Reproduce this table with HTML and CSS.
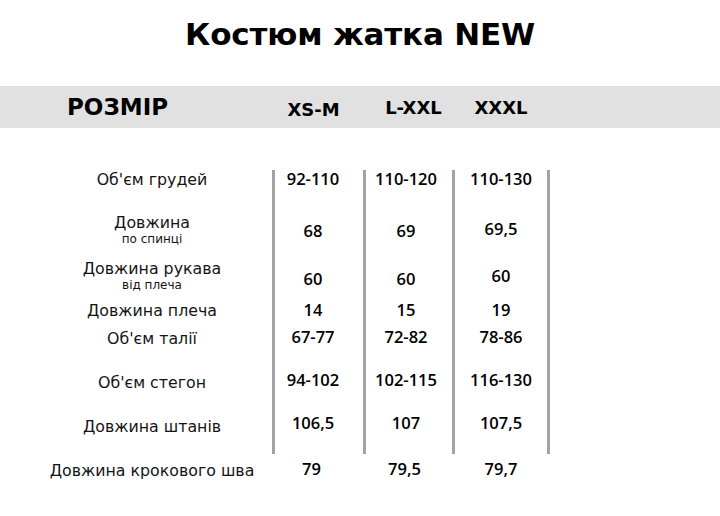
FILE: index.html
```html
<!DOCTYPE html>
<html lang="uk">
<head>
<meta charset="utf-8">
<link rel="stylesheet" href="styles.css">
</head>
<body>
<div class="page">
  <h1 class="title">Костюм жатка NEW</h1>
  <div class="bar">
    <div class="bar-label">РОЗМІР</div>
    <div class="bar-size c1 low">XS-M</div>
    <div class="bar-size c2">L-XXL</div>
    <div class="bar-size c3">XXXL</div>
  </div>
  <div class="table">
    <div class="row r1">
      <div class="label">Об'єм грудей</div>
      <div class="val c1">92-110</div>
      <div class="val c2">110-120</div>
      <div class="val c3">110-130</div>
    </div>
    <div class="row r2">
      <div class="label">Довжина<span class="sub">по спинці</span></div>
      <div class="val c1">68</div>
      <div class="val c2">69</div>
      <div class="val c3 up">69,5</div>
    </div>
    <div class="row r3">
      <div class="label">Довжина рукава<span class="sub">від плеча</span></div>
      <div class="val c1 down">60</div>
      <div class="val c2 down">60</div>
      <div class="val c3">60</div>
    </div>
    <div class="row r4">
      <div class="label">Довжина плеча</div>
      <div class="val c1">14</div>
      <div class="val c2">15</div>
      <div class="val c3">19</div>
    </div>
    <div class="row r5">
      <div class="label">Об'єм талії</div>
      <div class="val c1">67-77</div>
      <div class="val c2">72-82</div>
      <div class="val c3">78-86</div>
    </div>
    <div class="row r6">
      <div class="label">Об'єм стегон</div>
      <div class="val c1">94-102</div>
      <div class="val c2">102-115</div>
      <div class="val c3">116-130</div>
    </div>
    <div class="row r7">
      <div class="label">Довжина штанів</div>
      <div class="val c1">106,5</div>
      <div class="val c2">107</div>
      <div class="val c3">107,5</div>
    </div>
  </div>
  <div class="row last">
    <div class="label">Довжина крокового шва</div>
    <div class="val c1">79</div>
    <div class="val c2">79,5</div>
    <div class="val c3">79,7</div>
  </div>
</div>
</body>
</html>
```
FILE: styles.css
```css
html, body {
  margin: 0;
  padding: 0;
  background: #ffffff;
}
body {
  font-family: "DejaVu Sans", "Noto Sans", sans-serif;
  color: #141414;
}
.page {
  width: 720px;
  height: 516px;
  overflow: hidden;
}
.title {
  margin: 0;
  height: 86px;
  padding-top: 14px;
  box-sizing: border-box;
  text-align: center;
  font-size: 31px;
  line-height: 40px;
  font-weight: 700;
  color: #000;
  letter-spacing: -0.2px;
}
.bar {
  display: grid;
  grid-template-columns: 272px 91px 89px 98px 1fr;
  align-items: center;
  height: 42px;
  background: #e1e1e1;
}
.bar-label {
  padding-left: 67px;
  font-size: 23px;
  font-weight: 700;
  color: #000;
}
.bar-size {
  text-align: center;
  font-size: 18px;
  font-weight: 700;
  color: #000;
}
.bar-size.low {
  padding-top: 5px;
}
.bar-size.c1 { padding-right: 8px; }
.bar-size.c2 { padding-left: 12px; }
.table {
  margin-top: 42px;
}
.row {
  display: grid;
  grid-template-columns: 272px 91px 89px 98px 1fr;
}
.label {
  display: flex;
  flex-direction: column;
  justify-content: center;
  align-items: center;
  padding-left: 32px;
  font-size: 15.8px;
  line-height: 18px;
}
.sub {
  font-size: 12px;
  line-height: 15px;
}
.val {
  display: flex;
  justify-content: center;
  align-items: center;
  font-family: "Open Sans", "DejaVu Sans", sans-serif;
  font-size: 16.5px;
  line-height: 18px;
  font-weight: 600;
  color: #000;
}
.table .val {
  border-left: 3px solid #a3a3a3;
}
.table .val.c3 {
  border-right: 3px solid #a3a3a3;
}
.val.c1 { padding-right: 12px; }
.val.c2 { padding-right: 6px; }
.r1 { height: 30px; }
.r1 .label { padding-bottom: 10px; }
.r1 .val { padding-bottom: 12px; }
.r2 { height: 56px; }
.r2 .label { padding-top: 5px; }
.r2 .val { padding-top: 6px; }
.r2 .val.up { padding-top: 2px; }
.r3 { height: 38px; }
.r3 .label { padding-top: 3px; }
.r3 .val.down { padding-top: 8px; }
.r3 .val.c3 { padding-top: 2px; }
.r4 { height: 30px; }
.r4 .label { padding-top: 4px; }
.r4 .val { padding-top: 2px; }
.r5 { height: 34px; }
.r5 .label { padding-bottom: 4px; }
.r5 .val { padding-bottom: 8px; }
.r6 { height: 44px; }
.r6 .label { padding-top: 6px; }
.r6 .val { padding-top: 0; }
.r7 { height: 52px; }
.r7 .label { padding-bottom: 2px; }
.r7 .val { padding-bottom: 10px; }
.last { height: 32px; }
.last .label { padding-top: 2px; }
.last .val { padding-bottom: 2px; }
```
